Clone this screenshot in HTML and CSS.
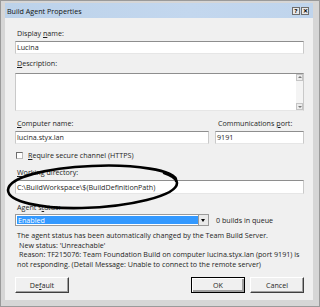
FILE: index.html
```html
<!DOCTYPE html>
<html lang="en">
<head>
  <meta charset="UTF-8">
  <title>Build Agent Properties</title>
  <link rel="stylesheet" href="styles.css">
</head>
<body>
  <div class="window">
    <div class="titlebar">
      <span class="title">Build Agent Properties</span>
      <div class="caption-buttons">
        <span class="cap-btn">?</span>
        <span class="cap-btn">&#x2715;</span>
      </div>
    </div>

    <div class="client">
      <div class="label first">Display <u>n</u>ame:</div>
      <div class="textbox">Lucina</div>

      <div class="label"><u>D</u>escription:</div>
      <div class="textarea">
        <div class="scroll">
          <span class="arrow up"></span>
          <span class="arrow down"></span>
        </div>
      </div>

      <div class="row">
        <div class="col-wide">
          <div class="label"><u>C</u>omputer name:</div>
          <div class="textbox">lucina.styx.lan</div>
        </div>
        <div class="col-port">
          <div class="label">Communications <u>p</u>ort:</div>
          <div class="textbox">9191</div>
        </div>
      </div>

      <label class="check-row">
        <span class="checkbox"></span>
        <span><u>R</u>equire secure channel (HTTPS)</span>
      </label>

      <div class="label workdir-label"><u>W</u>orking directory:</div>
      <div class="textbox tall">C:\BuildWorkspace\$(BuildDefinitionPath)</div>

      <div class="label status-label">Agent s<u>t</u>atus:</div>
      <div class="status-row">
        <div class="select">
          <span class="selected">Enabled</span>
          <span class="drop"></span>
        </div>
        <span class="queue">0 builds in queue</span>
      </div>

      <div class="message">
        <div>The agent status has been automatically changed by the Team Build Server.</div>
        <div class="indent">New status: 'Unreachable'</div>
        <div class="indent">Reason: TF215076: Team Foundation Build on computer lucina.styx.lan (port 9191) is</div>
        <div>not responding. (Detail Message: Unable to connect to the remote server)</div>
      </div>

      <div class="buttons">
        <button class="btn">De<u>f</u>ault</button>
        <div class="spacer"></div>
        <button class="btn default">OK</button>
        <button class="btn">Cancel</button>
      </div>
    </div>

    <svg class="scribble" width="320" height="307" viewBox="0 0 320 307">
      <path d="M176 181 C178 170 132 164 92 166 C46 168 9 177 8 190 C8 202 42 209 82 208 C128 207 177 196 177 183 C177 178 170 175 164 173"
            fill="none" stroke="#000" stroke-width="2.6" stroke-linecap="round"/>
    </svg>
  </div>
</body>
</html>
```

FILE: styles.css
```css
* {
  margin: 0;
  padding: 0;
  box-sizing: border-box;
}

body {
  width: 320px;
  height: 307px;
  overflow: hidden;
  font-family: 'Open Sans', 'Noto Sans', sans-serif;
  font-size: 7.15px;
  color: #1e1e1e;
  background: #fff;
}

u {
  text-decoration: underline;
}

.window {
  position: relative;
  width: 320px;
  height: 307px;
  background: #d6d6d6;
  border: 1px solid #9a9a9a;
  padding: 2px 6px 6px 4px;
  display: flex;
  flex-direction: column;
}

.titlebar {
  height: 15px;
  background: linear-gradient(90deg, #bcd2ea 0%, #c3d7ee 60%, #bfd4ec 100%);
  display: flex;
  align-items: center;
  justify-content: space-between;
  padding: 0 4px 0 2px;
}

.title {
  color: #111;
}

.caption-buttons {
  display: flex;
  gap: 1px;
  margin-top: 1px;
}

.cap-btn {
  width: 8px;
  height: 8px;
  background: #e8e8e8;
  border: 1px solid #6e6e6e;
  font-size: 6px;
  font-weight: bold;
  line-height: 6px;
  text-align: center;
  color: #000;
}

.client {
  flex: 1;
  background: #f0f0f0;
  padding: 10px 9px 0 10px;
  display: flex;
  flex-direction: column;
}

.label {
  height: 10px;
  line-height: 10px;
  margin-top: 4px;
  margin-bottom: 3px;
  padding-left: 2px;
}

.label.first {
  margin-top: 0;
}

.textbox {
  height: 13px;
  line-height: 11px;
  background: #fff;
  border: 1px solid;
  border-color: #8e8e8e #c9c9c9 #e6e6e6 #c9c9c9;
  padding-left: 1px;
  white-space: nowrap;
  overflow: hidden;
}

.textbox.tall {
  height: 14px;
  line-height: 12px;
}

.textarea {
  height: 38px;
  margin-top: 2px;
  background: #fff;
  border: 1px solid;
  border-color: #8e8e8e #c9c9c9 #e6e6e6 #c9c9c9;
  display: flex;
  justify-content: flex-end;
}

.scroll {
  width: 7px;
  display: flex;
  flex-direction: column;
  justify-content: space-between;
  background: #f4f4f4;
}

.arrow {
  height: 7px;
  background: #ececec;
  border: 1px solid #c4c4c4;
  position: relative;
}

.arrow::after {
  content: '';
  position: absolute;
  left: 1px;
  border-left: 2px solid transparent;
  border-right: 2px solid transparent;
}

.arrow.up::after {
  top: 1px;
  border-bottom: 2px solid #777;
}

.arrow.down::after {
  top: 2px;
  border-top: 2px solid #777;
}

.row {
  display: flex;
  gap: 6px;
  margin-top: 3px;
}

.col-wide {
  width: 194px;
}

.col-port {
  flex: 1;
}

.col-port .label {
  padding-left: 3px;
}

.check-row {
  height: 10px;
  margin-top: 6px;
  display: flex;
  align-items: center;
  gap: 5px;
  padding-left: 1px;
}

.checkbox {
  width: 7px;
  height: 7px;
  background: #fff;
  border: 1px solid #6d6d6d;
  border-right-color: #bbb;
  border-bottom-color: #bbb;
}

.workdir-label {
  margin-top: 7px;
}

.status-label {
  margin-top: 8px;
  margin-bottom: 2px;
}

.status-row {
  display: flex;
  align-items: center;
  gap: 7px;
}

.select {
  width: 194px;
  height: 12px;
  background: #fff;
  border: 1px solid #9a9a9a;
  display: flex;
  padding: 1px 0 1px 1px;
}

.selected {
  flex: 1;
  background: #3399ff;
  color: #fff;
  line-height: 8px;
  padding-left: 1px;
}

.drop {
  width: 10px;
  margin-top: -1px;
  margin-bottom: -1px;
  background: #e9e9e9;
  border-left: 1px solid #9a9a9a;
  position: relative;
}

.drop::after {
  content: '';
  position: absolute;
  left: 2px;
  top: 4px;
  border-left: 2.5px solid transparent;
  border-right: 2.5px solid transparent;
  border-top: 3px solid #000;
}

.message {
  margin-top: 5px;
  line-height: 9.5px;
  padding-left: 2px;
  white-space: nowrap;
}

.message .indent {
  padding-left: 2px;
}

.buttons {
  display: flex;
  gap: 5px;
  margin-top: 8px;
}

.spacer {
  flex: 1;
}

.btn {
  font-family: inherit;
  font-size: 7.15px;
  color: #1e1e1e;
  width: 54px;
  height: 16px;
  background: #f0f0f0;
  border: 1px solid;
  border-color: #fff #404040 #404040 #fff;
  box-shadow: inset -1px -1px 0 #a0a0a0;
}

.btn.default {
  border: 1px solid #000;
  box-shadow: inset 1px 1px 0 #fff, inset -2px -2px 0 #a0a0a0;
}

.scribble {
  position: absolute;
  left: -1px;
  top: -1px;
  pointer-events: none;
}
```
